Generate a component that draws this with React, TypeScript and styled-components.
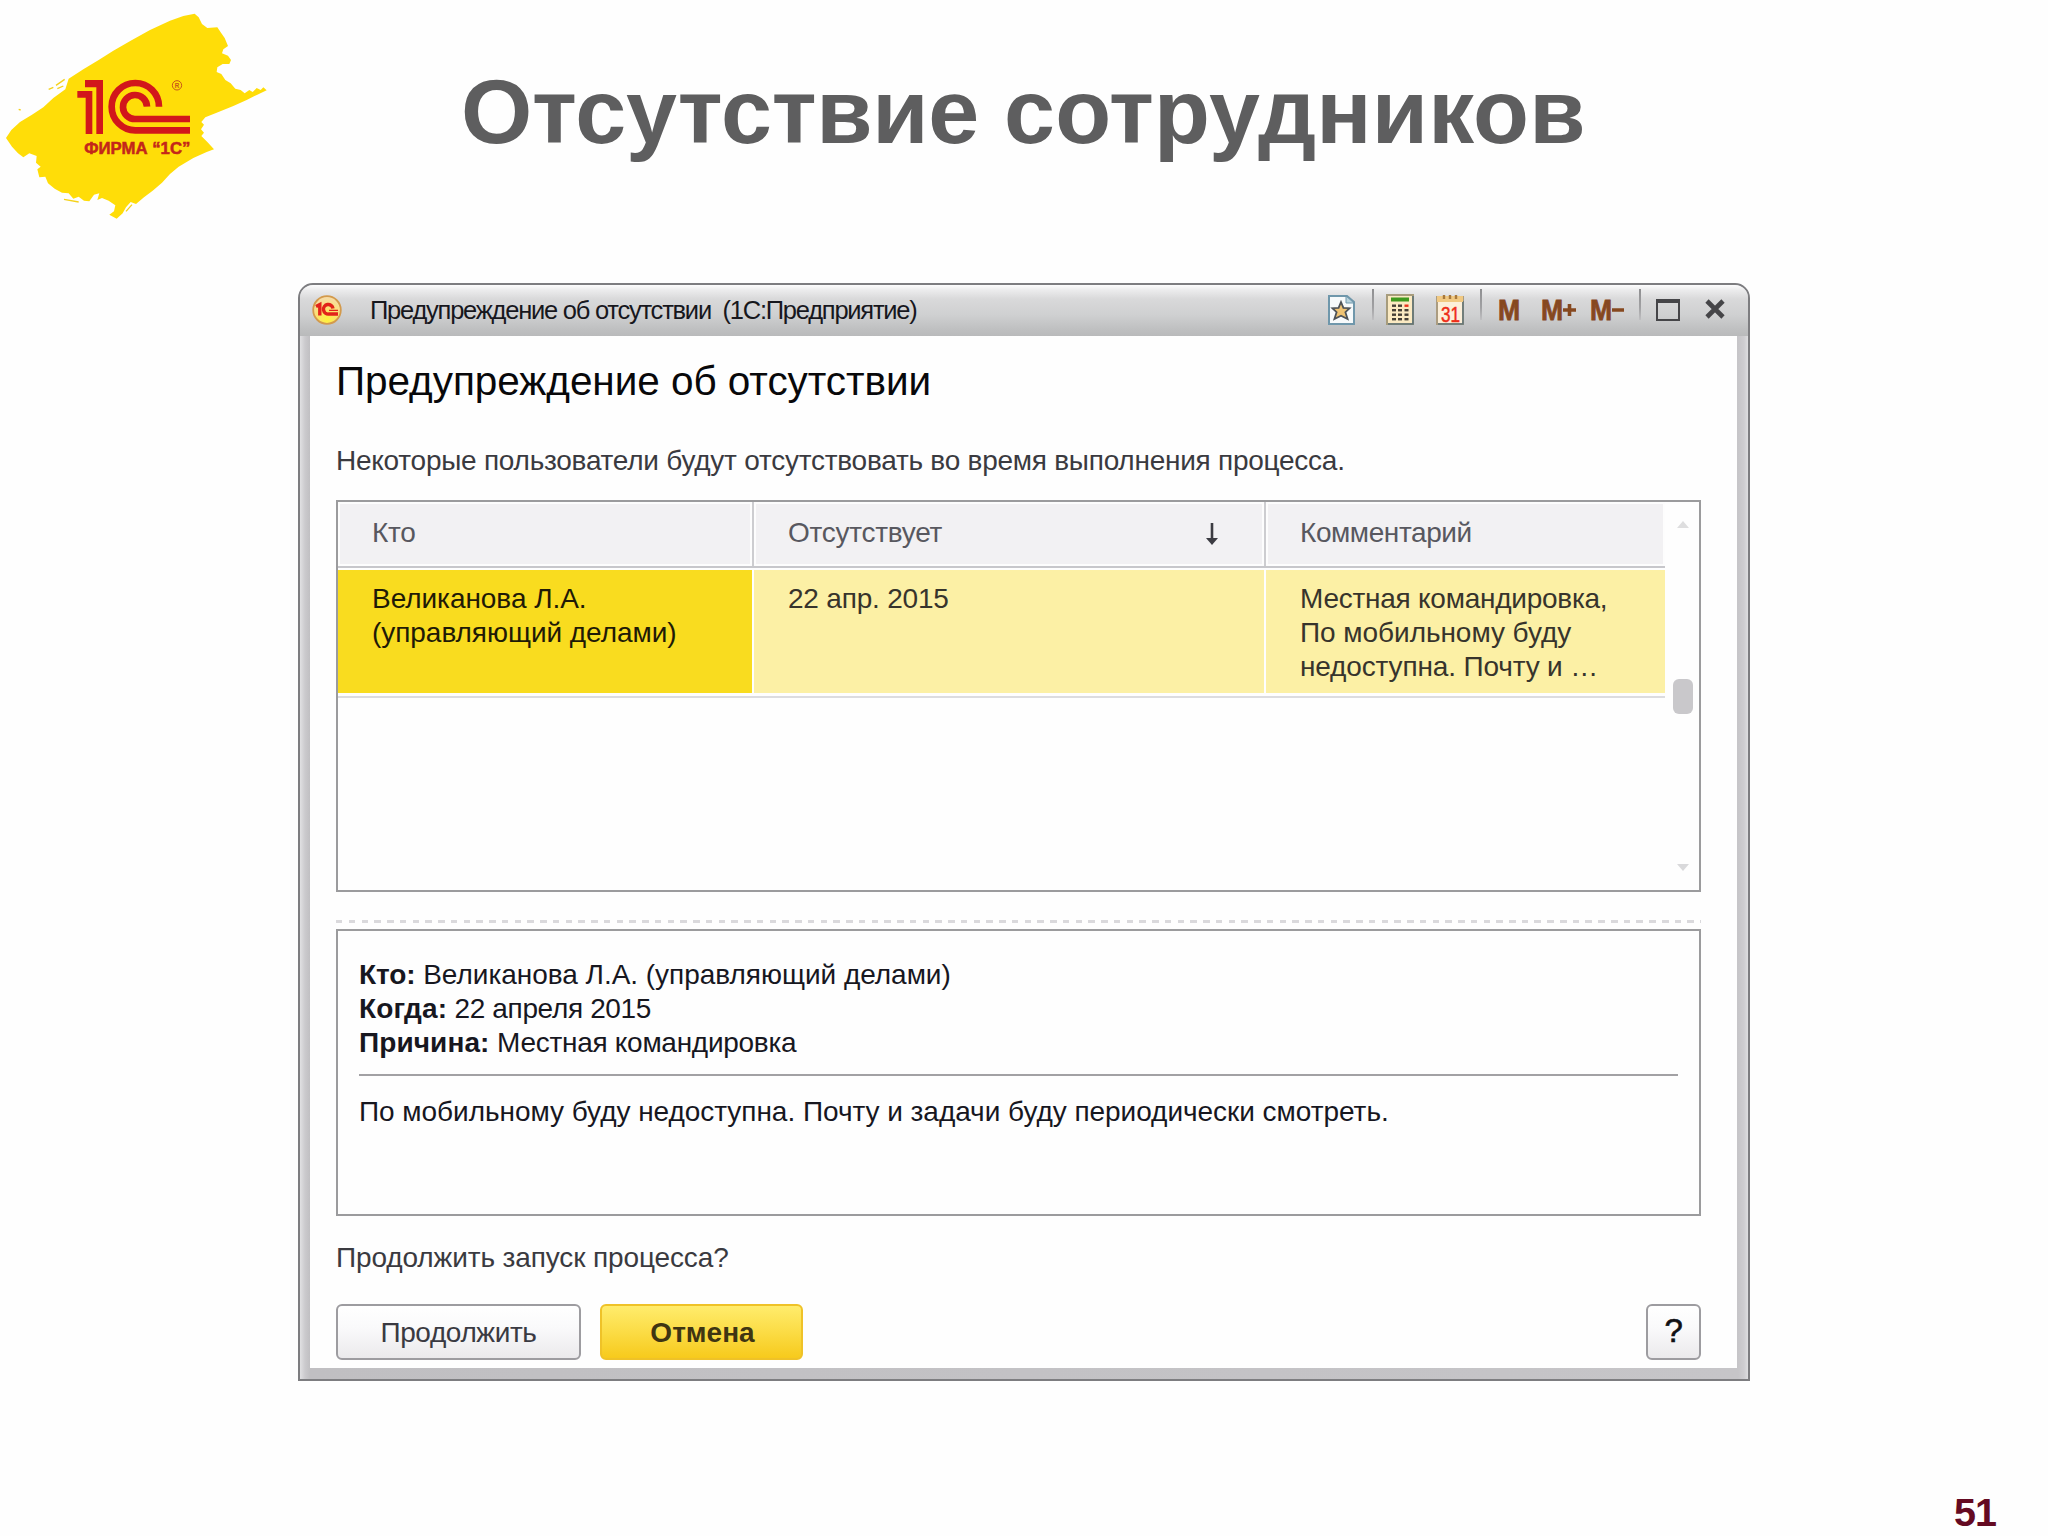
import React from 'react';
import styled, { createGlobalStyle } from 'styled-components';

const GlobalStyle = createGlobalStyle`
  *, *::before, *::after { box-sizing: border-box; }
  body { margin: 0; background: #fefefe; }
  h1, h2, p { margin: 0; font-weight: normal; }
  button { font: inherit; margin: 0; padding: 0; }
`;

const Slide = styled.main`
  width: 2048px;
  height: 1536px;
  overflow: hidden;
  display: flex;
  flex-direction: column;
  background: #fefefe;
  font-family: "Liberation Sans", Arial, sans-serif;
  font-size: 28px;
  line-height: 34px;
  color: #3a3a40;
`;

const Header = styled.header`
  height: 283px;
  flex: none;
  display: grid;
  grid-template-columns: 461px 1fr;
  align-items: start;
`;

const SlideTitle = styled.h1`
  margin-top: 56px;
  font-size: 91.6px;
  line-height: 110px;
  font-weight: bold;
  letter-spacing: 0.2px;
  color: #5e5e5f;
  white-space: nowrap;
`;

const FirstWord = styled.span`
  letter-spacing: -0.3px;
`;

const Window = styled.section`
  width: 1452px;
  height: 1098px;
  flex: none;
  margin-left: 298px;
  display: flex;
  flex-direction: column;
  border: 2px solid #7d7d80;
  border-radius: 15px 15px 0 0;
  background: linear-gradient(90deg, #e0e0e2 0, #cbcacd 5px, #c0bfc2 10px, #c6c5c8 1438px, #cecdd0 1444px, #dedee0 100%);
  overflow: hidden;
`;

const TitleBar = styled.div`
  height: 51px;
  flex: none;
  display: flex;
  align-items: flex-start;
  padding-left: 12px;
  background: linear-gradient(180deg, #fdfdfd 0, #ececed 5px, #d9d9da 14px, #cfd0d1 30px, #bfc0c1 44px, #b9babb 51px);
`;

const Caption = styled.div`
  flex: 1;
  margin: 8px 0 0 28px;
  font-size: 25.5px;
  letter-spacing: -1.24px;
  color: #17171d;
  white-space: pre;
`;

const BarIcon = styled.svg<{ $ml?: number; $mt?: number }>`
  display: block;
  flex: none;
  margin-left: ${(p) => p.$ml ?? 0}px;
  margin-top: ${(p) => p.$mt ?? 0}px;
`;

const Separator = styled.span<{ $ml: number }>`
  flex: none;
  width: 2px;
  height: 31px;
  margin: 4px 0 0 ${(p) => p.$ml}px;
  background: linear-gradient(180deg, #8f8f91, #a1a1a3 60%, #c0c0c2);
`;

const Body = styled.div`
  flex: none;
  width: 1427px;
  height: 1032px;
  margin-left: 10px;
  padding: 21px 36px 0 26px;
  background: #fefefe;
  display: flex;
  flex-direction: column;
`;

const FormTitle = styled.h2`
  font-size: 40.5px;
  line-height: 48px;
  letter-spacing: -0.05px;
  color: #08080a;
  white-space: nowrap;
`;

const Line = styled.p<{ $mt: number; $ls?: number }>`
  margin: ${(p) => p.$mt}px 0 0;
  letter-spacing: ${(p) => p.$ls ?? 0}px;
  white-space: nowrap;
`;

const Table = styled.div`
  margin-top: 22px;
  height: 392px;
  flex: none;
  border: 2px solid #9b9b9d;
  display: flex;
  justify-content: space-between;
`;

const Grid = styled.div`
  width: 1327px;
`;

const HeadRow = styled.div`
  display: grid;
  grid-template-columns: 416px 512px 399px;
  height: 66px;
  border-bottom: 2px solid #c7c7cb;
`;

const HeadCell = styled.div<{ $ls?: number; $last?: boolean }>`
  display: flex;
  justify-content: space-between;
  padding: 14px 33px 0 34px;
  border-right: ${(p) => (p.$last ? 'none' : '2px solid #cdcdd0')};
  background: #f2f1f3;
  box-shadow: inset 0 0 0 2px #fdfdfd;
  color: #58585f;
  letter-spacing: ${(p) => p.$ls ?? 0}px;
`;

const DataRow = styled.div`
  display: grid;
  grid-template-columns: 414px 510px 399px;
  gap: 2px;
  height: 130px;
  padding: 2px 0 3px;
  border-bottom: 2px solid #dcdcdf;
`;

const Cell = styled.div<{ $active?: boolean }>`
  padding: 12px 0 0 34px;
  background: ${(p) => (p.$active ? '#f9dc1f' : '#fcf0a5')};
  color: ${(p) => (p.$active ? '#1f1a06' : '#37342c')};
`;

const CellLine = styled.div<{ $ls?: number }>`
  letter-spacing: ${(p) => p.$ls ?? 0}px;
  white-space: nowrap;
`;

const ScrollBar = styled.div`
  width: 32px;
  display: flex;
  flex-direction: column;
  align-items: center;
  padding: 19px 0 19px;
`;

const Thumb = styled.span`
  width: 20px;
  height: 35px;
  margin: 151px 0 auto;
  border-radius: 6px;
  background: #c9c8cb;
`;

const Splitter = styled.div`
  flex: none;
  height: 3px;
  margin: 28px 0 6px;
  background: repeating-linear-gradient(90deg, #dad9dc 0 6.5px, transparent 6.5px 12.75px);
`;

const Details = styled.div`
  flex: none;
  height: 287px;
  border: 2px solid #9b9b9d;
  padding: 27px 21px 0;
  color: #17171f;
`;

const Fact = styled.div<{ $ls?: number; $bls?: number }>`
  letter-spacing: ${(p) => p.$ls ?? 0}px;
  b { letter-spacing: ${(p) => p.$bls ?? 0}px; }
`;

const Rule = styled.hr`
  height: 2px;
  margin: 14px 0 19px;
  border: 0;
  background: #a2a1a4;
`;

const Actions = styled.div`
  display: flex;
  gap: 19px;
  margin-top: 29px;
`;

const Button = styled.button<{ $w: number; $primary?: boolean }>`
  width: ${(p) => p.$w}px;
  height: 56px;
  padding: 2px 0 0 ${(p) => (p.$primary ? 2 : 0)}px;
  border: 2px solid ${(p) => (p.$primary ? '#efc228' : '#9d9ca0')};
  border-radius: 6px;
  background: ${(p) =>
    p.$primary ? 'linear-gradient(180deg, #ffec6c, #fbdc45 50%, #f7ca1c)' : 'linear-gradient(180deg, #ffffff, #fafafb 40%, #ebeaec)'};
  color: ${(p) => (p.$primary ? '#3f3512' : '#3a3a42')};
  font-weight: ${(p) => (p.$primary ? 'bold' : 'normal')};
  letter-spacing: ${(p) => (p.$primary ? 0 : -0.4)}px;
`;

const HelpButton = styled(Button)`
  margin-left: auto;
  padding: 0 0 2px;
  font-size: 33px;
  color: #101014;
  -webkit-text-stroke: 0.6px #101014;
`;

const PageNumber = styled.div`
  margin: 107px 52px 0 auto;
  font-size: 39.5px;
  line-height: 48px;
  font-weight: bold;
  letter-spacing: -1px;
  color: #640a22;
`;

function CompanyLogo() {
  return (
    <svg width="280" height="230" viewBox="0 0 840 690">
      <path
        fill="#ffdd08"
        d="M584 41 L596 52 L606 72 L622 84 L652 82 L662 97 L674 114 L684 138 L670 148 L666 160 L684 167 L693 180 L688 192 L668 192 L652 202 L650 216 L664 222 L676 240 L692 250 L706 266 L722 270 L734 280 L748 270 L758 276 L770 264 L782 270 L790 262 L800 271 L772 284 L740 300 L700 318 L650 338 L616 352 L604 366 L612 374 L603 388 L612 398 L604 408 L622 426 L642 448 L620 456 L580 474 L536 500 L510 522 L486 548 L458 572 L432 592 L408 612 L392 606 L378 622 L368 640 L350 656 L328 644 L342 634 L346 616 L326 602 L306 594 L292 600 L298 580 L282 584 L268 604 L252 602 L236 590 L220 596 L206 580 L186 578 L164 566 L144 550 L136 530 L118 532 L112 508 L122 500 L108 488 L110 468 L88 460 L70 472 L54 460 L36 440 L18 414 L34 390 L60 366 L96 344 L130 322 L160 294 L196 268 L206 236 L250 208 L296 180 L340 152 L392 122 L450 90 L510 62 L550 48 Z"
      />
      <g fill="none" stroke="#f5d21a" strokeWidth="4">
        <path d="M146 268 L160 262 M168 256 L194 238 M172 266 L190 258 M192 598 L236 606 M378 634 L396 614 M56 328 l6 2" />
      </g>
      <g fill="#d2171b">
        <path d="M255 240 H309 V402 H289 V262 H255 Z" />
        <path d="M232 273 H277 V402 H257 V293 H232 Z" />
      </g>
      <g fill="none" stroke="#d2171b" strokeWidth="20">
        <path d="M477 320 A71 71 0 1 0 406 391 H570" />
        <path d="M441 320 A36 36 0 1 0 406 357 H570" />
      </g>
      <circle cx="531" cy="256" r="14" fill="none" stroke="#c8571a" strokeWidth="3" />
      <text x="531" y="263" fontSize="19" fontWeight="bold" textAnchor="middle" fill="#c8571a" fontFamily="Liberation Sans, sans-serif">R</text>
      <text x="253" y="462" fontSize="48" fontWeight="bold" textLength="318" lengthAdjust="spacingAndGlyphs" fill="#c4261a" stroke="#c4261a" strokeWidth="1.5" fontFamily="Liberation Sans, sans-serif">ФИРМА “1С”</text>
    </svg>
  );
}

function AppBadge() {
  return (
    <BarIcon $mt={10} width="30" height="30" viewBox="0 0 30 30">
      <defs>
        <radialGradient id="ball" cx="0.5" cy="0.85" r="0.85">
          <stop offset="0" stopColor="#fff23c" />
          <stop offset="0.5" stopColor="#fbdf74" />
          <stop offset="1" stopColor="#f6dcae" />
        </radialGradient>
      </defs>
      <circle cx="15" cy="15" r="13.8" fill="url(#ball)" stroke="#d39a4c" strokeWidth="1.8" />
      <path d="M4 11.5 L7.8 9.5 V20.5" fill="none" stroke="#e2231a" strokeWidth="3.4" />
      <path d="M21 13.5 A4.8 4.8 0 1 0 17 19 H26" fill="none" stroke="#e2231a" strokeWidth="3.4" />
      <path d="M17 15.4 H26" stroke="#e2231a" strokeWidth="1.3" />
    </BarIcon>
  );
}

function FavoriteIcon() {
  return (
    <BarIcon $mt={10} width="27" height="30" viewBox="0 0 27 30">
      <path d="M1 1 H19 L26 7 V29 H1 Z" fill="#f7fafb" stroke="#6f97ab" strokeWidth="2" />
      <path d="M18 1 L26 8 H18 Z" fill="#b9d3dd" stroke="#6f97ab" strokeWidth="1" />
      <path d="M13 7 L15.4 12.8 L21.6 13.2 L17.4 17.2 L19.6 24 L13 20.8 L6.4 24 L8.6 17.2 L4.4 13.2 L10.6 12.8 Z" fill="#efc373" stroke="#4e5358" strokeWidth="1.8" />
    </BarIcon>
  );
}

function CalculatorIcon() {
  const rows = [10.5, 15, 19.5, 24];
  const cols = [6, 12, 18.5];
  return (
    <BarIcon $ml={12} $mt={9} width="28" height="31" viewBox="0 0 28 31">
      <rect x="1" y="1" width="26" height="29" fill="#fbeac2" stroke="#a79c7c" strokeWidth="2" />
      <path d="M27 2 V30 H2" fill="none" stroke="#5f7377" strokeWidth="1.6" />
      <rect x="5" y="3.5" width="18" height="4" fill="#3f9a1f" />
      {rows.map((y, r) => cols.map((x, c) => (
        <rect key={`${r}-${c}`} x={x} y={y} width="4" height="2.4" fill={c === 2 && r === 0 ? '#e8321c' : '#453f36'} />
      )))}
    </BarIcon>
  );
}

function CalendarIcon() {
  return (
    <BarIcon $ml={22} $mt={8} width="28" height="32" viewBox="0 0 28 32">
      <rect x="1" y="4" width="26" height="27" fill="#fcefd9" stroke="#ab9c80" strokeWidth="2" />
      <path d="M27 8 V31 H2" fill="none" stroke="#64777a" strokeWidth="1.6" />
      <rect x="1" y="3" width="26" height="6" fill="#f1c982" />
      <path d="M8 2 V6 M14 2 V6 M20 2 V6" stroke="#a8793c" strokeWidth="2.4" />
      <text x="14.5" y="28.5" fontSize="22" textAnchor="middle" textLength="19" lengthAdjust="spacingAndGlyphs" fill="#ee2d18" stroke="#ee2d18" strokeWidth="0.5" fontFamily="Liberation Sans, sans-serif">31</text>
    </BarIcon>
  );
}

const Memory = styled.span<{ $w: number; $ml: number }>`
  flex: none;
  display: flex;
  align-items: center;
  width: ${(p) => p.$w}px;
  margin: 8px 0 0 ${(p) => p.$ml}px;
  font-size: 29.5px;
  font-weight: bold;
  color: #86481f;
  -webkit-text-stroke: 0.8px #86481f;
  white-space: nowrap;
`;

const MemoryLetter = styled.span`
  width: 20px;
  display: flex;
  justify-content: center;
  transform: scaleX(0.9);
`;

const Plus = styled.svg`
  margin-left: 1px;
`;

function MemoryButton({ ml, sign }: { ml: number; sign?: 'plus' | 'minus' }) {
  return (
    <Memory $ml={ml} $w={sign ? 34 : 20}>
      <MemoryLetter>M</MemoryLetter>
      {sign && (
        <Plus width="13" height="14" viewBox="0 0 13 14">
          <path d={sign === 'plus' ? 'M0 7 H13 M6.5 1 V13' : 'M0 7 H12'} stroke="#86481f" strokeWidth="3.6" />
        </Plus>
      )}
    </Memory>
  );
}

function MaximizeIcon() {
  return (
    <BarIcon $ml={15} $mt={14} width="24" height="22" viewBox="0 0 24 22">
      <rect x="1" y="1" width="22" height="20" fill="none" stroke="#454548" strokeWidth="2" />
      <path d="M0 2 H24" stroke="#454548" strokeWidth="4" />
    </BarIcon>
  );
}

function CloseIcon() {
  return (
    <BarIcon $ml={25} $mt={14} width="43" height="20" viewBox="0 0 43 20">
      <path d="M2 2 L18 18 M18 2 L2 18" stroke="#454548" strokeWidth="4.6" />
    </BarIcon>
  );
}

export default function App() {
  return (
    <Slide>
      <GlobalStyle />
      <Header>
        <CompanyLogo />
        <SlideTitle><FirstWord>Отсутствие </FirstWord>сотрудников</SlideTitle>
      </Header>
      <Window>
        <TitleBar>
          <AppBadge />
          <Caption>{'Предупреждение об отсутствии  (1С:Предприятие)'}</Caption>
          <FavoriteIcon />
          <Separator $ml={17} />
          <CalculatorIcon />
          <CalendarIcon />
          <Separator $ml={16} />
          <MemoryButton ml={17} />
          <MemoryButton ml={23} sign="plus" />
          <MemoryButton ml={15} sign="minus" />
          <Separator $ml={14} />
          <MaximizeIcon />
          <CloseIcon />
        </TitleBar>
        <Body>
          <FormTitle>Предупреждение об отсутствии</FormTitle>
          <Line $mt={39} $ls={-0.25}>Некоторые пользователи будут отсутствовать во время выполнения процесса.</Line>
          <Table>
            <Grid>
              <HeadRow>
                <HeadCell $ls={-0.3}>Кто</HeadCell>
                <HeadCell $ls={-0.27}>
                  Отсутствует
                  <BarIcon $mt={7} width="37" height="24" viewBox="0 0 37 24">
                    <path d="M18 0 V18" stroke="#3c3c42" strokeWidth="2.6" />
                    <path d="M12 15 H24 L18 22 Z" fill="#3c3c42" />
                  </BarIcon>
                </HeadCell>
                <HeadCell $ls={-0.42} $last>Комментарий</HeadCell>
              </HeadRow>
              <DataRow>
                <Cell $active>
                  <CellLine $ls={-0.05}>Великанова Л.А.</CellLine>
                  <CellLine $ls={-0.05}>(управляющий делами)</CellLine>
                </Cell>
                <Cell>
                  <CellLine $ls={-0.2}>22 апр. 2015</CellLine>
                </Cell>
                <Cell>
                  <CellLine $ls={-0.25}>Местная командировка,</CellLine>
                  <CellLine $ls={-0.05}>По мобильному буду</CellLine>
                  <CellLine $ls={-0.15}>недоступна. Почту и …</CellLine>
                </Cell>
              </DataRow>
            </Grid>
            <ScrollBar>
              <svg width="12" height="7" viewBox="0 0 12 7"><path d="M6 0 L12 7 H0 Z" fill="#dededf" /></svg>
              <Thumb />
              <svg width="12" height="7" viewBox="0 0 12 7"><path d="M0 0 H12 L6 7 Z" fill="#d9d9db" /></svg>
            </ScrollBar>
          </Table>
          <Splitter />
          <Details>
            <Fact $bls={-0.1} $ls={-0.03}><b>Кто:</b> Великанова Л.А. (управляющий делами)</Fact>
            <Fact $bls={0.1} $ls={-0.35}><b>Когда:</b> 22 апреля 2015</Fact>
            <Fact $bls={0.1} $ls={-0.28}><b>Причина:</b> Местная командировка</Fact>
            <Rule />
            <Fact $ls={-0.04}>По мобильному буду недоступна. Почту и задачи буду периодически смотреть.</Fact>
          </Details>
          <Line $mt={25} $ls={-0.12}>Продолжить запуск процесса?</Line>
          <Actions>
            <Button $w={245}>Продолжить</Button>
            <Button $w={203} $primary>Отмена</Button>
            <HelpButton $w={55}>?</HelpButton>
          </Actions>
        </Body>
      </Window>
      <PageNumber>51</PageNumber>
    </Slide>
  );
}
